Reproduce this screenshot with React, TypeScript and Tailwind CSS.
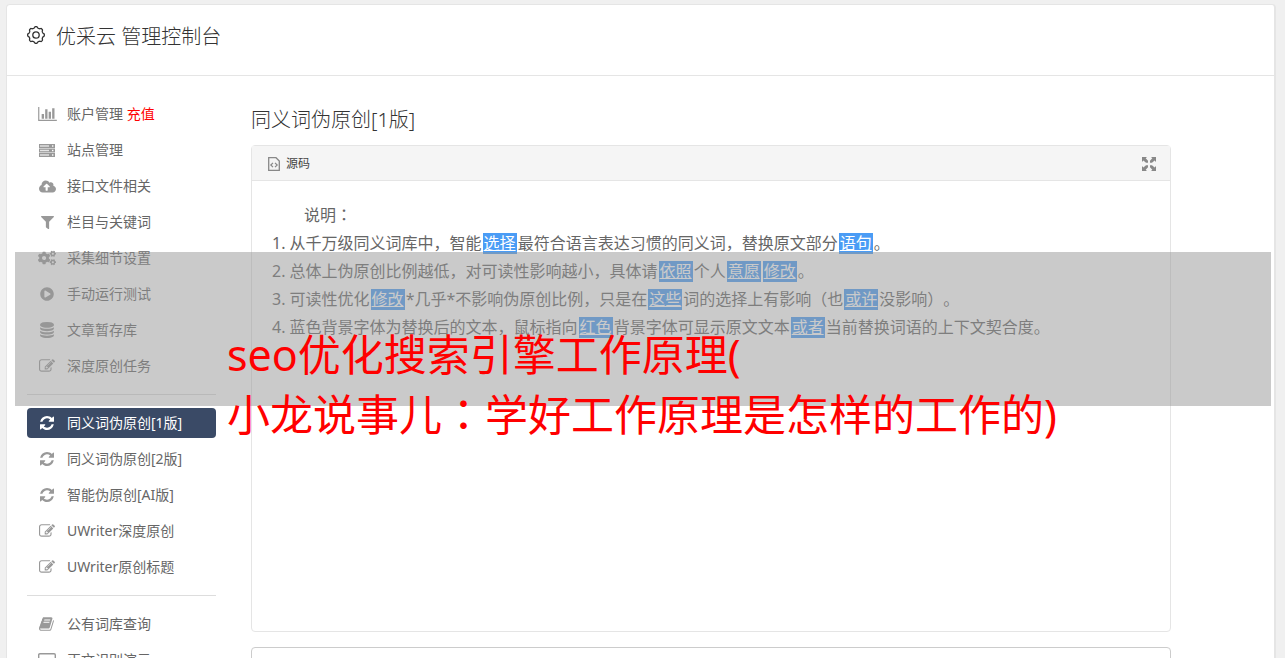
import type { ReactNode } from "react";
import { FaCloudUploadAlt, FaCogs, FaFilter, FaPlayCircle } from "react-icons/fa";

const Glyph = ({ viewBox, d, className }: { viewBox: string; d: string; className: string }) => (
  <svg viewBox={viewBox} fill="currentColor" className={className} aria-hidden="true">
    <path d={d} />
  </svg>
);

const ChartIcon = () => (
  <Glyph
    viewBox="0 128 2048 1536"
    className="h-[14px] w-[19px]"
    d="M640 896v512h-256v-512h256zm384-512v1024h-256v-1024h256zm1024 1152v128h-2048v-1536h128v1408h1920zm-640-896v768h-256v-768h256zm384-384v1152h-256v-1152h256z"
  />
);

const RefreshIcon = () => (
  <Glyph
    viewBox="0 0 1536 1536"
    className="size-[14px]"
    d="M1511 928q0 5-1 7-64 268-268 434.5t-478 166.5q-146 0-282.5-55t-243.5-157l-129 129q-19 19-45 19t-45-19-19-45v-448q0-26 19-45t45-19h448q26 0 45 19t19 45-19 45l-137 137q71 66 161 102t187 36q134 0 250-65t186-179q11-17 53-117 8-23 30-23h192q13 0 22.5 9.5t9.5 22.5zm25-800v448q0 26-19 45t-45 19h-448q-26 0-45-19t-19-45 19-45l138-138q-148-137-349-137-134 0-250 65t-186 179q-11 17-53 117-8 23-30 23h-199q-13 0-22.5-9.5t-9.5-22.5v-7q65-268 270-434.5t480-166.5q146 0 284 55.5t245 156.5l130-129q19-19 45-19t45 19 19 45z"
  />
);

const EditIcon = () => (
  <Glyph
    viewBox="0 0 1792 1792"
    className="size-4"
    d="M888 1184l116-116-152-152-116 116v56h96v96h56zm440-720q-16-16-33 1l-350 350q-17 17-1 33t33-1l350-350q17-17 1-33zm80 594v190q0 119-84.5 203.5t-203.5 84.5h-832q-119 0-203.5-84.5t-84.5-203.5v-832q0-119 84.5-203.5t203.5-84.5h832q63 0 117 25 15 7 18 23 3 17-9 29l-49 49q-14 14-32 8-23-6-45-6h-832q-66 0-113 47t-47 113v832q0 66 47 113t113 47h832q66 0 113-47t47-113v-126q0-13 9-22l64-64q15-15 35-7t20 29zm-96-738l288 288-672 672h-288v-288zm444 132l-92 92-288-288 92-92q28-28 68-28t68 28l152 152q28 28 28 68t-28 68z"
  />
);

const BookIcon = () => (
  <Glyph
    viewBox="0 0 1792 1792"
    className="size-4"
    d="M1639 478q40 57 18 129l-275 906q-19 64-76.5 107.5t-122.5 43.5h-923q-77 0-148.5-53.5t-99.5-131.5q-24-67-2-127 0-4 3-27t4-37q1-8-3-21.5t-3-19.5q2-11 8-21t16.5-23.5 16.5-23.5q23-38 45-91.5t30-91.5q3-10 .5-30t-.5-28q3-11 17-28t17-23q21-36 42-92t25-90q1-9-2.5-32t.5-28q4-13 22-30.5t22-22.5q19-26 42.5-84.5t27.5-96.5q1-8-3-25.5t-2-26.5q2-8 9-18t18-23 17-21q8-12 16.5-30.5t15-35 16-36 19.5-32 26.5-23.5 36-11.5 47.5 5.5l-1 3q38-9 51-9h761q74 0 114 56t18 130l-274 906q-36 119-71.5 153.5t-128.5 34.5h-869q-27 0-38 15-11 16-1 43 24 70 144 70h923q29 0 56-15.5t35-41.5l300-987q7-22 5-57 38 15 59 43zm-1064 2q-4 13 2 22.5t20 9.5h608q13 0 25.5-9.5t16.5-22.5l21-64q4-13-2-22.5t-20-9.5h-608q-13 0-25.5 9.5t-16.5 22.5zm-83 256q-4 13 2 22.5t20 9.5h608q13 0 25.5-9.5t16.5-22.5l21-64q4-13-2-22.5t-20-9.5h-608q-13 0-25.5 9.5t-16.5 22.5z"
  />
);

const DatabaseIcon = () => (
  <Glyph
    viewBox="0 0 1536 1792"
    className="h-4 w-[14px]"
    d="M768 768q237 0 443-43t325-127v170q0 69-103 128t-280 93.5-385 34.5-385-34.5-280-93.5-103-128v-170q119 84 325 127t443 43zm0 768q237 0 443-43t325-127v170q0 69-103 128t-280 93.5-385 34.5-385-34.5-280-93.5-103-128v-170q119 84 325 127t443 43zm0-384q237 0 443-43t325-127v170q0 69-103 128t-280 93.5-385 34.5-385-34.5-280-93.5-103-128v-170q119 84 325 127t443 43zm0-1152q208 0 385 34.5t280 93.5 103 128v128q0 69-103 128t-280 93.5-385 34.5-385-34.5-280-93.5-103-128v-128q0-69 103-128t280-93.5 385-34.5z"
  />
);

const ServerIcon = () => (
  <svg viewBox="0 0 16 13" className="h-[13px] w-4" aria-hidden="true">
    {[0, 4.5, 9].map((y) => (
      <g key={y}>
        <rect x="0" y={y} width="16" height="4" fill="#999" />
        <rect x="1" y={y + 1.3} width="9" height="1.4" fill="#e4e4e4" />
        <rect x="13" y={y + 1.3} width="1.4" height="1.4" fill="#fff" />
      </g>
    ))}
  </svg>
);

const ScreenIcon = () => (
  <svg viewBox="0 0 18 14" className="h-[14px] w-[18px]" fill="none" stroke="currentColor" aria-hidden="true">
    <rect x="0.7" y="0.7" width="16.6" height="10.6" rx="1.2" strokeWidth="1.4" />
    <path d="M5 13.4h8" />
  </svg>
);

// Wavy outline of the gear, eight rounded teeth
const gearPath = Array.from({ length: 144 }, (_, i) => {
  const a = (i / 144) * Math.PI * 2;
  const r = 7.7 + 0.7 * Math.tanh(1.6 * Math.cos(a * 8));
  return `${i ? "L" : "M"}${(9 + r * Math.sin(a)).toFixed(2)} ${(9 - r * Math.cos(a)).toFixed(2)}`;
}).join("") + "Z";

const GearIcon = () => (
  <svg viewBox="0 0 18 18" className="size-[18px]" fill="none" stroke="currentColor" strokeWidth="1.3" aria-hidden="true">
    <path d={gearPath} />
    <circle cx="9" cy="9" r="3.2" />
  </svg>
);

const SourceIcon = () => (
  <svg viewBox="0 0 12 14" className="h-[14px] w-3" fill="none" stroke="#888" aria-hidden="true">
    <path d="M.7.7h7.3l3.3 3.4v9.2H.7z" strokeWidth="1.3" />
    <path d="M5 5.8L2.8 8 5 10.2M7 5.8L9.2 8 7 10.2" strokeWidth="1.2" />
  </svg>
);

const ExpandIcon = () => (
  <svg viewBox="0 0 14 14" className="size-[14px]" fill="#888" aria-hidden="true">
    <path d="M0 0h5L3.7 1.3 6 3.8v2H4L1.4 3.6 0 5zM14 0v5l-1.4-1.4L10 5.8H8v-2l2.3-2.5L9 0zM0 14V9l1.4 1.4L4 8.2h2v2l-2.3 2.5L5 14zM14 14H9l1.3-1.3L8 10.2v-2h2l2.6 2.2L14 9z" />
  </svg>
);

type Item = { icon: ReactNode; label: string; extra?: string; active?: boolean };

const menu: Item[][] = [
  [
    { icon: <ChartIcon />, label: "账户管理", extra: "充值" },
    { icon: <ServerIcon />, label: "站点管理" },
    { icon: <FaCloudUploadAlt size={17} />, label: "接口文件相关" },
    { icon: <FaFilter size={13} />, label: "栏目与关键词" },
    { icon: <FaCogs size={18} />, label: "采集细节设置" },
    { icon: <FaPlayCircle size={14} />, label: "手动运行测试" },
    { icon: <DatabaseIcon />, label: "文章暂存库" },
    { icon: <EditIcon />, label: "深度原创任务" },
  ],
  [
    { icon: <RefreshIcon />, label: "同义词伪原创[1版]", active: true },
    { icon: <RefreshIcon />, label: "同义词伪原创[2版]" },
    { icon: <RefreshIcon />, label: "智能伪原创[AI版]" },
    { icon: <EditIcon />, label: "UWriter深度原创" },
    { icon: <EditIcon />, label: "UWriter原创标题" },
  ],
  [
    { icon: <BookIcon />, label: "公有词库查询" },
    { icon: <ScreenIcon />, label: "正文识别演示" },
  ],
];

const MenuItem = ({ icon, label, extra, active }: Item) => (
  <li>
    <a
      href="#"
      className={
        active
          ? "flex h-[30px] items-center rounded bg-[#3a4a66] text-white"
          : "flex h-[30px] items-center text-[#666]"
      }
    >
      <span className={active ? "flex w-10 justify-center text-white" : "flex w-10 justify-center text-[#999]"}>
        {icon}
      </span>
      <span className="whitespace-nowrap">
        {label}
        {extra && <span className="text-[#f00]"> {extra}</span>}
      </span>
    </a>
  </li>
);

// Replaced word
const W = ({ children }: { children: string }) => (
  <span className="mx-px inline-block bg-[#4a9cf5] px-px leading-[21px] text-white underline">{children}</span>
);

// Colon set in the middle of its cell
const Colon = () => <span className="font-['Noto_Sans_CJK_JP',sans-serif] leading-none">：</span>;

const App = () => {
  return (
    <div className="relative h-screen overflow-hidden bg-[#f0f0f0] px-[7px] pt-1 font-['Noto_Sans','Noto_Sans_CJK_SC',sans-serif] text-sm [text-spacing-trim:space-all]">
      <div className="mr-0.5 -ml-px rounded-t border border-r-2 border-[#e5e5e5] bg-white">
        {/* Header */}
        <header className="flex h-[71px] items-start gap-[11px] border-b border-[#e5e5e5] px-5 pt-[15px] text-[#333]">
          <div className="flex h-[30px] items-center">
            <GearIcon />
          </div>
          <h1 className="text-xl leading-[34px] font-light">优采云 管理控制台</h1>
        </header>

        <div className="flex gap-[35px] pt-[23px] pl-5">
          {/* Sidebar */}
          <nav className="w-[189px] shrink-0">
            {menu.map((group, i) => (
              <ul
                key={i}
                className={i ? "mt-[13px] flex flex-col gap-1.5 border-t border-[#ddd] pt-[13px]" : "flex flex-col gap-1.5"}
              >
                {group.map((item) => (
                  <MenuItem key={item.label} {...item} />
                ))}
              </ul>
            ))}
          </nav>

          {/* Editor */}
          <main className="mr-[103px] min-w-0 flex-1">
            <h2 className="pt-1.5 pb-2.5 text-xl leading-[30px] font-light text-[#333]">同义词伪原创[1版]</h2>
            <section className="rounded border border-[#e5e5e5]">
              <div className="flex h-[35px] items-center justify-between border-b border-[#e5e5e5] bg-[#f5f5f5] pt-0.5 pr-3.5 pl-4 text-xs text-[#444]">
                <button type="button" className="flex items-center gap-1.5">
                  <SourceIcon />
                  源码
                </button>
                <button type="button" aria-label="全屏">
                  <ExpandIcon />
                </button>
              </div>
              <div className="min-h-[450px] px-5 pt-5 text-base leading-7 text-[#666]">
                <p className="pl-8">
                  说明
                  <Colon />
                </p>
                <p>
                  1. 从千万级同义词库中，智能<W>选择</W>最符合语言表达习惯的同义词，替换原文部分<W>语句</W>。
                </p>
                <p>
                  2. 总体上伪原创比例越低，对可读性影响越小，具体请<W>依照</W>个人<W>意愿</W>
                  <W>修改</W>。
                </p>
                <p>
                  3. 可读性优化<W>修改</W>*几乎*不影响伪原创比例，只是在<W>这些</W>词的选择上有影响（也<W>或许</W>没影响）。
                </p>
                <p>
                  4. 蓝色背景字体为替换后的文本，鼠标指向<W>红色</W>背景字体可显示原文文本<W>或者</W>当前替换词语的上下文契合度。
                </p>
              </div>
            </section>
            <textarea aria-label="原文" className="mt-[15px] block h-40 w-full resize-none rounded-sm border border-[#ccc] p-2" />
          </main>
        </div>
      </div>

      {/* Caption band */}
      <div className="absolute top-[252px] right-3.5 left-[15px] h-[154px] bg-[#969696]/50" />
      <p className="absolute top-[325px] left-[227px] text-[43px] leading-[60px] whitespace-nowrap text-[#f00]">
        seo优化搜索引擎工作原理(
        <br />
        小龙说事儿
        <Colon />
        学好工作原理是怎样的工作的)
      </p>
    </div>
  );
};

export default App;
